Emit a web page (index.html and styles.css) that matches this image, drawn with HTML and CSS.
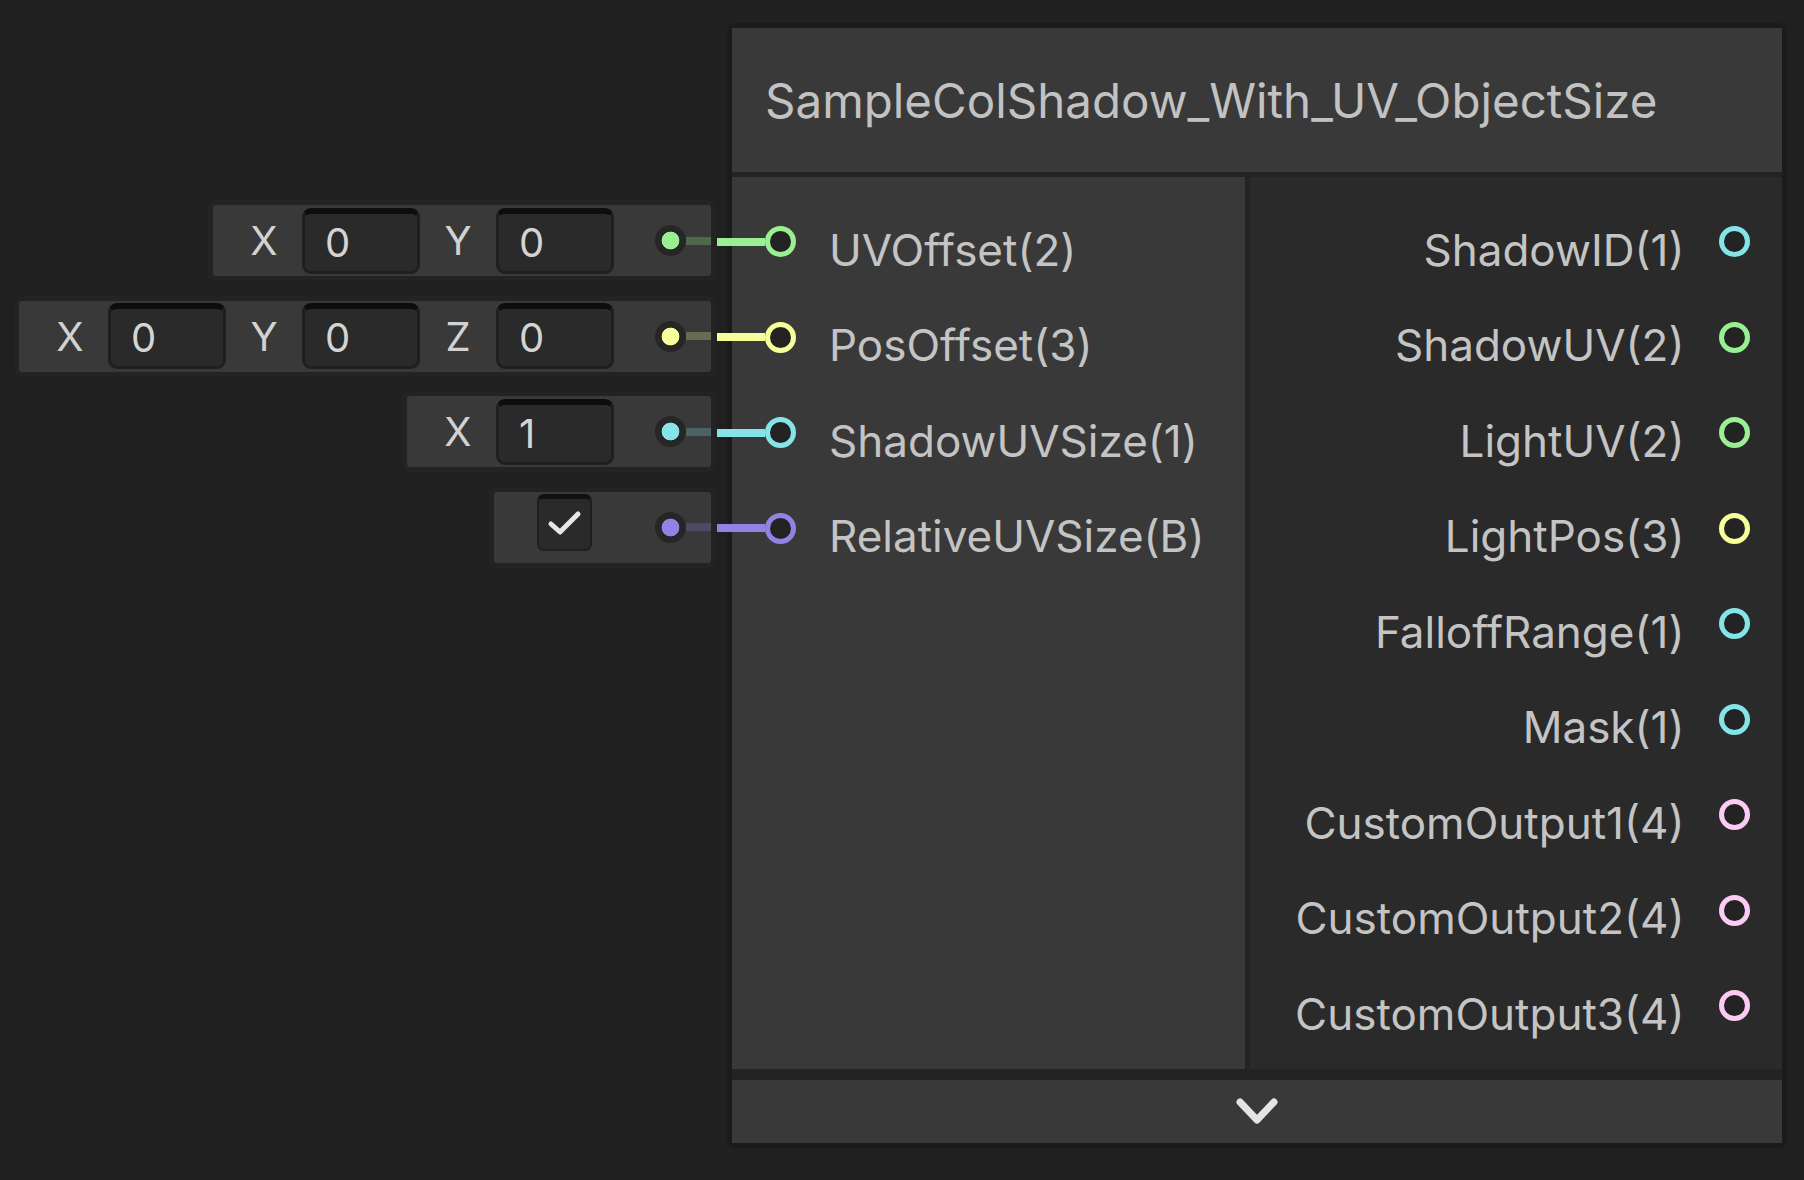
FILE: index.html
```html
<!DOCTYPE html>
<html lang="en">
<head>
<meta charset="utf-8">
<title>SampleColShadow_With_UV_ObjectSize</title>
<link rel="stylesheet" href="styles.css">
</head>
<body>
<div class="canvas">
  <div class="inputs">
    <div class="in-row">
      <div class="in-box">
        <span class="axis">X</span><span class="field">0</span>
        <span class="axis">Y</span><span class="field">0</span>
        <span class="stub c-green"><span class="dot"></span><span class="fade"></span></span>
      </div>
    </div>
    <div class="in-row">
      <div class="in-box">
        <span class="axis">X</span><span class="field">0</span>
        <span class="axis">Y</span><span class="field">0</span>
        <span class="axis">Z</span><span class="field">0</span>
        <span class="stub c-yellow"><span class="dot"></span><span class="fade"></span></span>
      </div>
    </div>
    <div class="in-row">
      <div class="in-box">
        <span class="axis">X</span><span class="field">1</span>
        <span class="stub c-cyan"><span class="dot"></span><span class="fade"></span></span>
      </div>
    </div>
    <div class="in-row">
      <div class="in-box check-box">
        <span class="checkbox">
          <svg width="36" height="28" viewBox="0 0 36 28"><polyline points="4,14 13,22 31,4" fill="none" stroke="#e6e6e6" stroke-width="5" stroke-linecap="round" stroke-linejoin="round"/></svg>
        </span>
        <span class="stub wide c-purple"><span class="dot"></span><span class="fade"></span></span>
      </div>
    </div>
  </div>

  <div class="node">
    <div class="title">SampleColShadow_With_UV_ObjectSize</div>
    <div class="node-body">
      <div class="col in-col">
        <div class="port in c-green"><span class="ring"></span><span class="label">UVOffset(2)</span></div>
        <div class="port in c-yellow"><span class="ring"></span><span class="label">PosOffset(3)</span></div>
        <div class="port in c-cyan"><span class="ring"></span><span class="label">ShadowUVSize(1)</span></div>
        <div class="port in c-purple"><span class="ring"></span><span class="label">RelativeUVSize(B)</span></div>
      </div>
      <div class="col out-col">
        <div class="port out c-cyan"><span class="label">ShadowID(1)</span><span class="ring"></span></div>
        <div class="port out c-green"><span class="label">ShadowUV(2)</span><span class="ring"></span></div>
        <div class="port out c-green"><span class="label">LightUV(2)</span><span class="ring"></span></div>
        <div class="port out c-yellow"><span class="label">LightPos(3)</span><span class="ring"></span></div>
        <div class="port out c-cyan"><span class="label">FalloffRange(1)</span><span class="ring"></span></div>
        <div class="port out c-cyan"><span class="label">Mask(1)</span><span class="ring"></span></div>
        <div class="port out c-pink"><span class="label">CustomOutput1(4)</span><span class="ring"></span></div>
        <div class="port out c-pink"><span class="label">CustomOutput2(4)</span><span class="ring"></span></div>
        <div class="port out c-pink"><span class="label">CustomOutput3(4)</span><span class="ring"></span></div>
      </div>
    </div>
    <div class="footer">
      <svg width="48" height="33" viewBox="0 0 48 33"><polyline points="7,7 24,25 41,7" fill="none" stroke="#e4e4e4" stroke-width="7" stroke-linecap="round" stroke-linejoin="round"/></svg>
    </div>
  </div>
</div>
</body>
</html>
```

FILE: styles.css
```css
* { box-sizing: border-box; }

html, body {
  margin: 0;
  padding: 0;
  background: #202020;
}

body {
  width: 1804px;
  height: 1180px;
  overflow: hidden;
  font-family: Inter, "Noto Sans", "Liberation Sans", sans-serif;
  color: #c4c4c4;
}

.c-green  { --c: #9aef92; }
.c-yellow { --c: #f6ff9a; }
.c-cyan   { --c: #84e4e7; }
.c-purple { --c: #9481e6; }
.c-pink   { --c: #fbcbf4; }

.canvas {
  display: flex;
  align-items: flex-start;
  padding-top: 23px;
}

/* ---------- inline input fields ---------- */
.inputs {
  width: 727px;
  padding-top: 170px;
  padding-right: 11px;
  display: flex;
  flex-direction: column;
}

.in-row {
  height: 95.5px;
  display: flex;
  justify-content: flex-end;
  align-items: center;
}

.in-box {
  display: flex;
  align-items: center;
  height: 81px;
  padding-left: 13px;
  background: #393939;
  border: 5px solid #232323;
  border-radius: 8px;
}

.axis {
  width: 76px;
  text-align: center;
  font-size: 40px;
  color: #d2d2d2;
}

.field {
  width: 118px;
  height: 66px;
  display: flex;
  align-items: center;
  padding-left: 20px;
  font-size: 40px;
  color: #d4d4d4;
  background: #2a2a2a;
  border: 3px solid #1f1f1f;
  border-top: 6px solid #0d0d0d;
  border-radius: 9px;
}

.stub {
  width: 97px;
  display: flex;
  align-items: center;
  padding-left: 41px;
}
.stub.wide { width: 119px; padding-left: 63px; }

.dot {
  width: 31px;
  height: 31px;
  flex: none;
  border-radius: 50%;
  background: radial-gradient(circle, var(--c) 0 8.5px, #262626 9.2px);
}

.fade {
  flex: 1;
  height: 8px;
  background: var(--c);
  opacity: 0.25;
}

.check-box { padding-left: 43px; }

.checkbox {
  width: 55px;
  height: 57px;
  margin-bottom: 9px;
  display: flex;
  align-items: center;
  justify-content: center;
  background: #2a2a2a;
  border: 2px solid #1f1f1f;
  border-top: 5px solid #111111;
  border-radius: 7px;
}

/* ---------- node ---------- */
.node {
  width: 1060px;
  display: flex;
  flex-direction: column;
  background: #232323;
  border: 5px solid #1b1b1b;
  border-radius: 8px;
}

.title {
  height: 144px;
  display: flex;
  align-items: center;
  padding-left: 33px;
  font-size: 47.5px;
  color: #c2c2c2;
  background: #393939;
}

.node-body {
  margin-top: 5px;
  height: 892px;
  display: grid;
  grid-template-columns: 513px 532px;
  column-gap: 5px;
}

.col {
  padding-top: 17px;
  display: flex;
  flex-direction: column;
}
.in-col  { background: #393939; }
.out-col { background: #2a2a2a; }

.port {
  height: 95.5px;
  display: flex;
  align-items: center;
  font-size: 44px;
  color: #c4c4c4;
}
.port.in  { padding-left: 32.5px; gap: 33.5px; }
.port.out { justify-content: flex-end; padding-right: 32.5px; gap: 34px; }

.label {
  padding-top: 16px;
}

.ring {
  position: relative;
  width: 31px;
  height: 31px;
  flex: none;
  border: 5px solid var(--c);
  border-radius: 50%;
  background: #232323;
}

.port.in .ring::before {
  content: "";
  position: absolute;
  right: 100%;
  top: 50%;
  width: 48px;
  height: 8px;
  margin-top: -4px;
  margin-right: 5px;
  background: var(--c);
}

.footer {
  margin-top: 11px;
  height: 63px;
  display: flex;
  align-items: center;
  justify-content: center;
  background: #393939;
}
```
